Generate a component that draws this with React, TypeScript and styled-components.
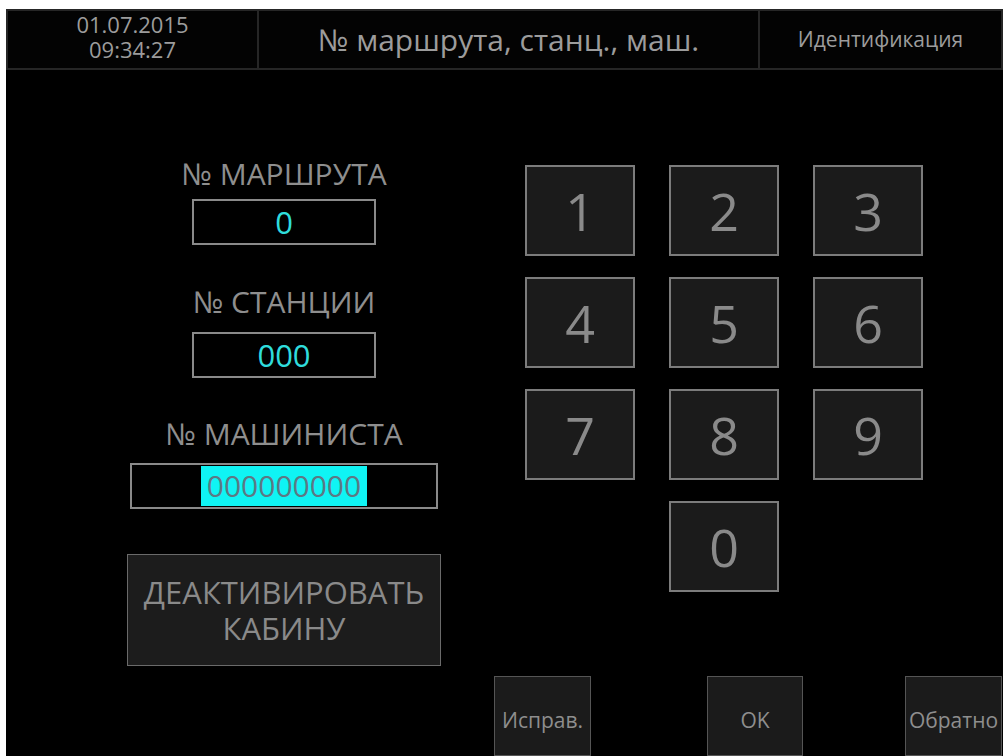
import React from "react";
import styled, { createGlobalStyle } from "styled-components";

const GlobalStyle = createGlobalStyle`
  html, body {
    margin: 0;
    padding: 0;
    background: #ffffff;
  }
  body {
    font-family: "Open Sans", "Noto Sans", "DejaVu Sans", sans-serif;
    overflow: hidden;
  }
`;

const Screen = styled.div`
  margin: 9px 0 0 6px;
  width: 997px;
  height: 747px;
  background: #000;
  overflow: hidden;
  display: flex;
  flex-direction: column;
  color: #8c8c8c;
`;

const Header = styled.header`
  display: grid;
  grid-template-columns: 249px 501px 1fr;
  height: 61px;
  box-sizing: border-box;
  border: 2px solid #262626;
  background: #030303;
`;

const HeaderCell = styled.div<{ $size: number; $divider?: boolean; $lift?: number }>`
  display: flex;
  flex-direction: column;
  align-items: center;
  justify-content: center;
  padding-bottom: ${(p) => p.$lift ?? 0}px;
  border-left: ${(p) => (p.$divider ? "2px solid #262626" : "none")};
  font-size: ${(p) => p.$size}px;
  line-height: 25px;
  color: #9c9c9c;
  white-space: nowrap;
`;

const Main = styled.main`
  display: flex;
  height: 611px;
`;

const FieldColumn = styled.section`
  width: 314px;
  margin-left: 121px;
  padding-top: 89px;
  display: flex;
  flex-direction: column;
  align-items: center;
`;

const FieldLabel = styled.div<{ $top: number; $gap: number }>`
  margin-top: ${(p) => p.$top}px;
  margin-bottom: ${(p) => p.$gap}px;
  font-size: 30px;
  line-height: 30px;
  color: #8e8e8e;
  white-space: nowrap;
`;

const ValueBox = styled.div<{ $width: number }>`
  width: ${(p) => p.$width}px;
  height: 46px;
  box-sizing: border-box;
  border: 2px solid #8a8a8a;
  display: flex;
  align-items: center;
  justify-content: center;
  font-size: 31px;
  color: #2fdcdc;
`;

const Selected = styled.span`
  background: #0ff4f4;
  color: #5d7884;
  font-size: 30px;
  padding: 0 6px;
  line-height: 40px;
  height: 40px;
`;

const WideButton = styled.button`
  margin-top: 45px;
  width: 314px;
  height: 112px;
  box-sizing: border-box;
  border: 1px solid #6a6a6a;
  background: #1c1c1c;
  color: #8a8a8a;
  font-family: inherit;
  font-size: 31px;
  line-height: 36px;
  padding: 0;
`;

const Keypad = styled.section`
  margin-left: 84px;
  margin-top: 95px;
  display: grid;
  grid-template-columns: repeat(3, 110px);
  grid-auto-rows: 91px;
  column-gap: 34px;
  row-gap: 21px;
  align-content: start;
`;

const Key = styled.button<{ $col?: number }>`
  grid-column: ${(p) => p.$col ?? "auto"};
  box-sizing: border-box;
  border: 2px solid #7c7c7c;
  background: #1b1b1b;
  color: #8a8a8a;
  font-family: inherit;
  font-size: 52px;
  padding: 0;
  display: flex;
  align-items: center;
  justify-content: center;
`;

const BottomBar = styled.footer`
  display: flex;
  padding-left: 488px;
`;

const SoftKey = styled.button<{ $width: number; $offset: number }>`
  margin-left: ${(p) => p.$offset}px;
  width: ${(p) => p.$width}px;
  height: 80px;
  box-sizing: border-box;
  border: 1px solid #555;
  background: #1b1b1b;
  color: #8e8e8e;
  font-family: inherit;
  font-size: 21px;
  padding: 8px 0 0;
  display: flex;
  align-items: center;
  justify-content: center;
  white-space: nowrap;
  overflow: visible;
`;

const digits = ["1", "2", "3", "4", "5", "6", "7", "8", "9"];

export default function App() {
  return (
    <>
      <GlobalStyle />
      <Screen>
        <Header>
          <HeaderCell $size={22} $lift={4}>
            <span>01.07.2015</span>
            <span>09:34:27</span>
          </HeaderCell>
          <HeaderCell $size={30} $divider>
            № маршрута, станц., маш.
          </HeaderCell>
          <HeaderCell $size={21} $divider>
            Идентификация
          </HeaderCell>
        </Header>
        <Main>
          <FieldColumn>
            <FieldLabel $top={0} $gap={10}>№ МАРШРУТА</FieldLabel>
            <ValueBox $width={184}>0</ValueBox>
            <FieldLabel $top={42} $gap={15}>№ СТАНЦИИ</FieldLabel>
            <ValueBox $width={184}>000</ValueBox>
            <FieldLabel $top={41} $gap={14}>№ МАШИНИСТА</FieldLabel>
            <ValueBox $width={308}>
              <Selected>000000000</Selected>
            </ValueBox>
            <WideButton>
              ДЕАКТИВИРОВАТЬ
              <br />
              КАБИНУ
            </WideButton>
          </FieldColumn>
          <Keypad>
            {digits.map((d) => (
              <Key key={d}>{d}</Key>
            ))}
            <Key $col={2}>0</Key>
          </Keypad>
        </Main>
        <BottomBar>
          <SoftKey $width={97} $offset={0}>Исправ.</SoftKey>
          <SoftKey $width={96} $offset={116}>OK</SoftKey>
          <SoftKey $width={97} $offset={102}>Обратно</SoftKey>
        </BottomBar>
      </Screen>
    </>
  );
}
